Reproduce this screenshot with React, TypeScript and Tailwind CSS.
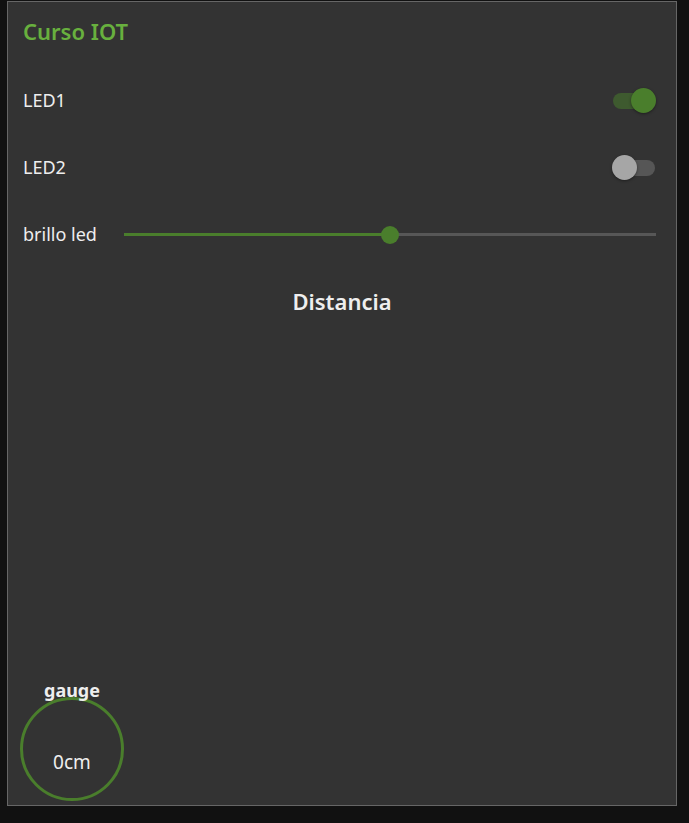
import { useState } from "react";

function Toggle({ on, onChange }: { on: boolean; onChange: () => void }) {
  return (
    <button
      onClick={onChange}
      className="relative w-[42px] h-[16px] rounded-full flex items-center"
    >
      <span
        className={
          on
            ? "absolute inset-0 rounded-full bg-[#3e5a2f]"
            : "absolute inset-0 rounded-full bg-[#565656]"
        }
      />
      <span
        className={
          on
            ? "absolute left-[18px] w-[25px] h-[25px] rounded-full bg-[#4a7e2c] shadow-[0_1px_3px_rgba(0,0,0,0.4)]"
            : "absolute left-[-1px] w-[25px] h-[25px] rounded-full bg-[#a6a6a6] shadow-[0_1px_3px_rgba(0,0,0,0.4)]"
        }
      />
    </button>
  );
}

export default function App() {
  const [led1, setLed1] = useState(true);
  const [led2, setLed2] = useState(false);
  const [brillo] = useState(50);
  const distancia = 0;

  return (
    <div
      className="min-h-screen w-full bg-[#111111] pt-[1px] pl-[7px]"
      style={{ fontFamily: '"Noto Sans", "Open Sans", sans-serif' }}
    >
      <div className="w-[670px] h-[805px] bg-[#333333] border border-[#666666] flex flex-col text-[#eeeeee]">
        {/* Header */}
        <div className="h-[58px] mb-[7px] flex items-center pl-[15px]">
          <h1 className="text-[22px] font-semibold text-[#68b03e]">Curso IOT</h1>
        </div>

        {/* Switches */}
        <div className="h-[67px] flex items-center justify-between pl-[15px] pr-[21px]">
          <span className="text-[18px]">LED1</span>
          <Toggle on={led1} onChange={() => setLed1(!led1)} />
        </div>
        <div className="h-[67px] flex items-center justify-between pl-[15px] pr-[21px]">
          <span className="text-[18px]">LED2</span>
          <Toggle on={led2} onChange={() => setLed2(!led2)} />
        </div>

        {/* Slider */}
        <div className="h-[67px] flex items-center pl-[15px] pr-[20px]">
          <span className="w-[101px] text-[18px] whitespace-nowrap">brillo led</span>
          <div className="relative flex-1 h-[3px] bg-[#575757] flex items-center">
            <div className="h-[3px] bg-[#4a7e2c]" style={{ width: `${brillo}%` }} />
            <div
              className="absolute w-[18px] h-[18px] rounded-full bg-[#4a7e2c] -ml-[9px]"
              style={{ left: `${brillo}%` }}
            />
          </div>
        </div>

        {/* Distancia */}
        <div className="h-[67px] flex items-center justify-center">
          <h2 className="text-[22px] font-semibold">Distancia</h2>
        </div>

        <div className="flex-1" />

        {/* Gauge */}
        <div className="ml-[12px] mb-[4px] w-[104px] flex flex-col items-center">
          <span className="relative z-10 text-[18px] font-bold leading-[22px] -mb-[4px]">gauge</span>
          <div className="w-[104px] h-[104px] rounded-full border-[3px] border-[#4a7e2c] flex items-center justify-center pt-[26px]">
            <span className="text-[19px]">{distancia}cm</span>
          </div>
        </div>
      </div>
    </div>
  );
}
